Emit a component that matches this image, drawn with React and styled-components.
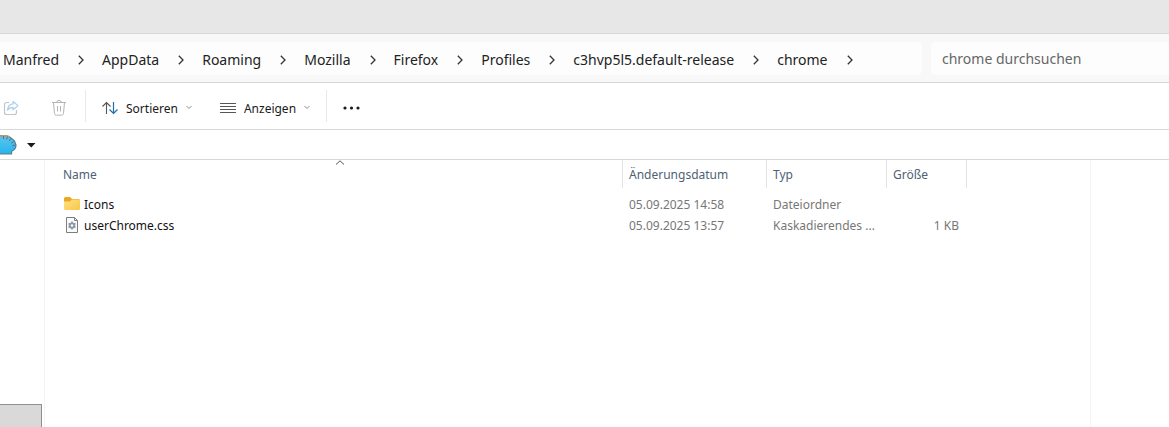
import React from "react";
import styled, { createGlobalStyle } from "styled-components";

const crumbs = [
  "Manfred",
  "AppData",
  "Roaming",
  "Mozilla",
  "Firefox",
  "Profiles",
  "c3hvp5l5.default-release",
  "chrome",
];

const files = [
  {
    name: "Icons",
    icon: "folder",
    date: "05.09.2025 14:58",
    type: "Dateiordner",
    size: "",
  },
  {
    name: "userChrome.css",
    icon: "css",
    date: "05.09.2025 13:57",
    type: "Kaskadierendes ...",
    size: "1 KB",
  },
];

const ShareIcon = () => (
  <svg width="16" height="16" viewBox="0 0 16 16" fill="none">
    <path
      d="M6 2.5H3.5a2 2 0 0 0-2 2v8a2 2 0 0 0 2 2h8a2 2 0 0 0 2-2V10"
      stroke="#c3c6c9"
      strokeWidth="1.2"
    />
    <path
      d="M10 1.5 15 5.6 10 9.7V7.4C7.5 7.3 5.800 8.300 4.500 10.200 4.700 6.600 6.800 4.200 10 3.900Z"
      stroke="#a9cfea"
      strokeWidth="1.2"
      strokeLinejoin="round"
    />
  </svg>
);

const TrashIcon = () => (
  <svg width="16" height="18" viewBox="0 0 16 18" fill="none" stroke="#b4b4b4">
    <path d="M1 3.500h14M5.800 3.500a2.200 2.200 0 0 1 4.400 0M2.500 3.500l1 11a2 2 0 0 0 2 1.700h5a2 2 0 0 0 2-1.700l1-11M6.500 7v5.500M9.500 7v5.500" />
  </svg>
);

const SortIcon = () => (
  <svg width="16" height="16" viewBox="1 0 16 16" fill="none">
    <path d="M5.500 14V2.500M1.500 6.500l4-4 4 4" stroke="#555" strokeWidth="1.1" />
    <path d="M12.500 2v11.500M8.500 9.500l4 4 4-4" stroke="#1f6fb0" strokeWidth="1.2" />
  </svg>
);

const ViewIcon = () => (
  <svg width="16" height="12" viewBox="0 0 16 12" stroke="#555">
    <path d="M0 1.500h16M0 4.500h16M0 7.500h16M0 10.500h16" />
  </svg>
);

const DownIcon = () => (
  <svg width="6" height="5" viewBox="0 0 6 5" fill="none" stroke="#8a8a8a">
    <path d="M.5 1 3 3.500 5.500 1" />
  </svg>
);

const ChevronIcon = () => (
  <svg width="6" height="10" viewBox="0 0 6 10" fill="none">
    <path d="M.8 .8 5 5 .8 9.200" stroke="#333" strokeWidth="1.3" />
  </svg>
);

const ShellIcon = () => (
  <svg width="17" height="20" viewBox="0 0 17 20">
    <defs>
      <linearGradient id="shell" x1="0" y1="0" x2="0" y2="1">
        <stop offset="0" stopColor="#62c3e8" />
        <stop offset="1" stopColor="#22b6f2" />
      </linearGradient>
    </defs>
    <path
      d="M-2 1.200C3 0 8 .4 11 3c2.500 1.600 4.300 3.800 4.800 6.500.4 1.800-.2 3.600-1.400 4.800-.8 1-1.700 1.400-2.600 1.700L11.500 18.800H-2Z"
      fill="url(#shell)"
      stroke="#587c90"
      strokeWidth="1.200"
    />
    <path
      d="M0 1C3.500.3 7.500.6 10 2.300"
      fill="none"
      stroke="#d09a62"
      strokeWidth="1.200"
    />
    <path
      d="M3.500 1v3M7.500 1.500l-1 3M11 3.500 9.200 6M13.800 6.500l-2.500 1.600M15.500 10l-3 .6"
      stroke="#4f7488"
      strokeWidth="1"
    />
  </svg>
);

const FolderIcon = () => (
  <svg width="16" height="14" viewBox="0 0 16 14">
    <defs>
      <linearGradient id="folder" x1="0" y1="0" x2="1" y2="1">
        <stop offset="0" stopColor="#ffe08a" />
        <stop offset="1" stopColor="#f8c744" />
      </linearGradient>
    </defs>
    <path
      d="M0 1.500A1.500 1.500 0 0 1 1.500 0H6l2 2h6.500A1.500 1.500 0 0 1 16 3.500V8H0Z"
      fill="#e8a91d"
    />
    <path
      d="M0 4.500h6L8 2.500h6.500A1.500 1.500 0 0 1 16 4v7.500a1.500 1.500 0 0 1-1.500 1.500h-13A1.500 1.500 0 0 1 0 11.500Z"
      fill="url(#folder)"
    />
  </svg>
);

const CssIcon = () => (
  <svg width="16" height="16" viewBox="0 0 16 16" fill="none">
    <path d="M2.500.5h8l3 3v12h-11Z" fill="#fafafa" stroke="#7d7d7d" />
    <path d="M10.500.5v3h3" stroke="#7d7d7d" />
    <circle cx="8" cy="8.500" r="2.200" stroke="#8b97a5" strokeWidth="1.800" />
    <path
      d="M8 4.500v1.500M8 11v1.500M4.500 6.500l1.300.8M10.200 9.700l1.300.8M11.500 6.500l-1.300.8M5.800 9.700l-1.300.8"
      stroke="#8b97a5"
      strokeWidth="1.600"
    />
  </svg>
);

const App = () => {
  return (
    <>
      <GlobalStyle />
      <Window>
        <TitleBar />

        <NavBar>
          <AddressBar aria-label="Pfad">
            <CrumbList>
              {crumbs.map((crumb) => (
                <Crumb key={crumb}>
                  <a href={`#${crumb}`}>{crumb}</a>
                  <ChevronIcon />
                </Crumb>
              ))}
            </CrumbList>
          </AddressBar>
          <Search
            type="search"
            aria-label="chrome durchsuchen"
            placeholder="chrome durchsuchen"
          />
        </NavBar>

        <Toolbar>
          <ToolGroup $gap={32}>
            <ToolButton aria-label="Freigeben" disabled>
              <ShareIcon />
            </ToolButton>
            <ToolButton aria-label="Löschen" disabled>
              <TrashIcon />
            </ToolButton>
          </ToolGroup>
          <ToolGroup $gap={28}>
            <ToolButton>
              <SortIcon />
              <ToolLabel>Sortieren</ToolLabel>
              <DownIcon />
            </ToolButton>
            <ToolButton>
              <ViewIcon />
              <ToolLabel>Anzeigen</ToolLabel>
              <DownIcon />
            </ToolButton>
          </ToolGroup>
          <ToolGroup $gap={0}>
            <ToolButton aria-label="Mehr">
              <svg width="17" height="4" viewBox="0 0 17 4" fill="#1a1a1a">
                <circle cx="2" cy="2" r="1.600" />
                <circle cx="8.500" cy="2" r="1.600" />
                <circle cx="15" cy="2" r="1.600" />
              </svg>
            </ToolButton>
          </ToolGroup>
        </Toolbar>

        <ShellBar>
          <ShellIcon />
          <ToolButton aria-label="Menü">
            <svg width="9" height="5" viewBox="0 0 9 5" fill="#1a1a1a">
              <path d="M0 0h8.500L4.250 4.500Z" />
            </svg>
          </ToolButton>
        </ShellBar>

        <Content>
          <Sidebar>
            <SidebarItem />
          </Sidebar>
          <FilePane>
            <FileTable>
              <colgroup>
                <col />
                <col width="144" />
                <col width="120" />
                <col width="80" />
              </colgroup>
              <thead>
                <tr>
                  <HeadCell aria-sort="ascending">
                    <SortMark width="9" height="5" viewBox="0 0 9 5">
                      <path d="M.5 4.500l4-3.700 4 3.700" fill="none" stroke="#555" />
                    </SortMark>
                    Name
                  </HeadCell>
                  <HeadCell>Änderungsdatum</HeadCell>
                  <HeadCell>Typ</HeadCell>
                  <HeadCell>Größe</HeadCell>
                </tr>
              </thead>
              <tbody>
                {files.map((file) => (
                  <tr key={file.name}>
                    <Cell $primary>
                      <FileName>
                        {file.icon === "folder" ? <FolderIcon /> : <CssIcon />}
                        {file.name}
                      </FileName>
                    </Cell>
                    <Cell>{file.date}</Cell>
                    <Cell>{file.type}</Cell>
                    <Cell $align="right">{file.size}</Cell>
                  </tr>
                ))}
              </tbody>
            </FileTable>
          </FilePane>
          <Preview />
        </Content>
      </Window>
    </>
  );
};

const GlobalStyle = createGlobalStyle`
  * {
    box-sizing: border-box;
  }

  body {
    margin: 0;
    background: #fff;
    color: #1a1a1a;
    font-family: "Noto Sans", "Open Sans", sans-serif;
    font-size: 12px;
  }

  button,
  input {
    font: inherit;
    color: inherit;
  }
`;

const Window = styled.div`
  display: flex;
  flex-direction: column;
  min-height: 100vh;
  overflow: hidden;
`;

const TitleBar = styled.header`
  height: 34px;
  background: #e7e7e7;
  border-bottom: 1px solid #d8d8d8;
`;

const NavBar = styled.div`
  display: flex;
  gap: 9px;
  padding: 8px 0 7px;
  background: #f8f8f8;
  border-bottom: 1px solid #d5d5d5;
`;

const AddressBar = styled.nav`
  flex: 1;
  height: 33px;
  padding-left: 3px;
  background: #fdfdfd;
  border-radius: 0 5px 5px 0;
`;

const CrumbList = styled.ol`
  display: flex;
  align-items: center;
  height: 100%;
  margin: 0;
  padding: 2px 0 0;
  list-style: none;
`;

const Crumb = styled.li`
  display: flex;
  align-items: center;
  font-size: 14px;
  line-height: 20px;
  white-space: nowrap;

  a {
    color: #222;
    text-decoration: none;
  }

  svg {
    margin: 0 18px 0 19px;
  }
`;

const Search = styled.input`
  width: 238px;
  height: 33px;
  padding: 0 11px;
  border: 0;
  border-radius: 5px 0 0 5px;
  background: #fdfdfd;
  font-size: 14px;
  outline: none;

  &::placeholder {
    color: #666;
    opacity: 1;
  }
`;

const Toolbar = styled.div`
  display: flex;
  align-items: center;
  height: 47px;
  border-bottom: 1px solid #d8d8d8;
`;

const ToolGroup = styled.div`
  display: flex;
  align-items: center;
  gap: ${(props) => props.$gap}px;
  height: 32px;
  padding: 3px 16px 0;

  &:first-child {
    padding: 3px 18px 0 3px;
  }

  & + & {
    border-left: 1px solid #e8e8e8;
  }
`;

const ToolButton = styled.button`
  display: flex;
  align-items: center;
  gap: 8px;
  padding: 0;
  border: 0;
  background: none;
  line-height: 20px;
`;

const ToolLabel = styled.span`
  padding-top: 3px;
`;

const ShellBar = styled.div`
  display: flex;
  align-items: center;
  gap: 10px;
  height: 30px;
  padding-top: 1px;
  border-bottom: 1px solid #d8d8d8;
`;

const Content = styled.main`
  display: grid;
  grid-template-columns: 45px 1fr 79px;
  flex: 1;
`;

const Sidebar = styled.aside`
  display: flex;
  flex-direction: column;
  justify-content: flex-end;
  padding-right: 2px;
  border-right: 1px solid #f3f3f3;
`;

const SidebarItem = styled.div`
  height: 23px;
  background: #d9d9d9;
  border: 1px solid #8f8f8f;
  border-width: 1px 1px 0 0;
`;

const FilePane = styled.section`
  padding: 0 123px 0 12px;
`;

const Preview = styled.aside`
  border-left: 1px solid #f5f5f5;
`;

const FileTable = styled.table`
  width: 100%;
  table-layout: fixed;
  border-collapse: separate;
  border-spacing: 0;

  thead::after {
    content: "";
    display: block;
    height: 6px;
  }
`;

const HeadCell = styled.th`
  position: relative;
  height: 28px;
  padding: 2px 6px 0;
  border-right: 1px solid #e3e3e3;
  color: #4f5f74;
  font-weight: 400;
  line-height: 20px;
  text-align: left;
`;

const SortMark = styled.svg`
  position: absolute;
  top: 0;
  left: 50%;
  transform: translateX(-50%);
`;

const Cell = styled.td`
  height: 21px;
  padding: 0 8px 0 ${(props) => (props.$primary ? "7px" : "6px")};
  color: ${(props) => (props.$primary ? "#111" : "#777")};
  line-height: 20px;
  text-align: ${(props) => props.$align || "left"};
  white-space: nowrap;
`;

const FileName = styled.span`
  display: flex;
  align-items: center;
  gap: 4px;

  svg {
    margin-bottom: 2px;
  }
`;

export default App;
